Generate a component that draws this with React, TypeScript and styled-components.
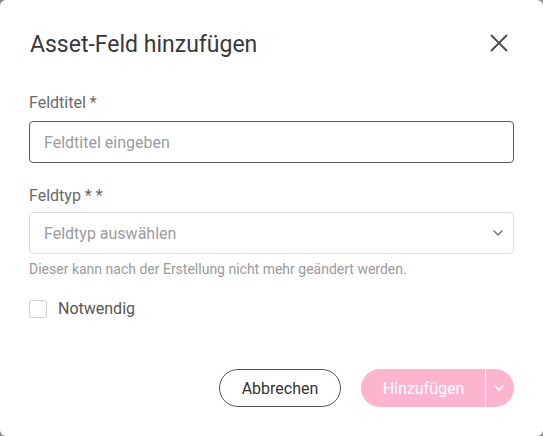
import React from "react";
import styled, { createGlobalStyle } from "styled-components";

const Global = createGlobalStyle`
  html, body { margin: 0; padding: 0; background: #8a8a8a; }
  body { font-family: Roboto, "Noto Sans", "Liberation Sans", sans-serif; }
  * { box-sizing: border-box; }
`;

const Dialog = styled.div`
  width: 543px;
  height: 436px;
  background: #ffffff;
  border-radius: 6px;
  padding: 32px 29px 29px 29px;
  display: flex;
  flex-direction: column;
`;

const Header = styled.div`
  display: flex;
  align-items: center;
  justify-content: space-between;
  height: 26px;
`;

const Title = styled.h2`
  margin: 0;
  font-size: 23px;
  line-height: 26px;
  font-weight: 400;
  color: #383838;
  padding-left: 1px;
`;

const CloseButton = styled.button`
  width: 24px;
  height: 24px;
  padding: 0;
  margin-right: 3px;
  margin-top: -4px;
  border: none;
  background: transparent;
  display: flex;
  align-items: center;
  justify-content: center;
  color: #4a4a4a;
`;

const Form = styled.div`
  margin-top: 35px;
  display: flex;
  flex-direction: column;
`;

const Label = styled.label<{ $mt?: number }>`
  display: block;
  font-size: 16px;
  line-height: 20px;
  color: #6a6a6a;
  margin-top: ${(p) => p.$mt ?? 0}px;
`;

const TextInput = styled.input`
  margin-top: 8px;
  width: 100%;
  height: 42px;
  border: 1px solid #5c5c5c;
  border-radius: 4px;
  padding: 0 14px;
  font-family: inherit;
  font-size: 16px;
  color: #333;
  outline: none;
  &::placeholder { color: #9b9b9b; }
`;

const Select = styled.div`
  margin-top: 6px;
  height: 42px;
  border: 1px solid #dcdcdc;
  border-radius: 4px;
  padding: 0 10px 0 14px;
  display: flex;
  align-items: center;
  justify-content: space-between;
  font-size: 16px;
  color: #9b9b9b;
`;

const Helper = styled.div`
  margin-top: 6px;
  font-size: 14px;
  line-height: 18px;
  color: #9a9a9a;
`;

const CheckRow = styled.label`
  margin-top: 22px;
  display: flex;
  align-items: center;
  gap: 11px;
  font-size: 16px;
  line-height: 18px;
  color: #555555;
`;

const CheckBox = styled.span`
  width: 18px;
  height: 18px;
  border: 1px solid #cfcfcf;
  border-radius: 3px;
  background: #fff;
`;

const Footer = styled.div`
  margin-top: auto;
  display: flex;
  justify-content: flex-end;
  gap: 20px;
`;

const OutlineButton = styled.button`
  height: 38px;
  padding: 0 20px;
  border: 1px solid #555555;
  border-radius: 19px;
  background: #fff;
  font-family: inherit;
  font-size: 16px;
  color: #333333;
  width: 122px;
`;

const SplitButton = styled.div`
  height: 38px;
  display: flex;
  border-radius: 19px;
  overflow: hidden;
  background: #fdb4cf;
`;

const SplitMain = styled.button`
  height: 38px;
  width: 125px;
  border: none;
  background: transparent;
  font-family: inherit;
  font-size: 16px;
  color: #ffffff;
  padding: 0 0 0 1px;
  border-right: 1px solid #ffffff;
`;

const SplitArrow = styled.button`
  height: 38px;
  width: 28px;
  border: none;
  background: transparent;
  padding: 0 2px 0 0;
  display: flex;
  align-items: center;
  justify-content: center;
  color: #ffffff;
`;

const Chevron = ({ color }: { color: string }) => (
  <svg width="10" height="6" viewBox="0 0 10 6" fill="none">
    <path d="M1 1 L5 5 L9 1" stroke={color} strokeWidth="1.5" strokeLinecap="round" strokeLinejoin="round" />
  </svg>
);

export default function App() {
  return (
    <>
      <Global />
      <Dialog>
        <Header>
          <Title>Asset-Feld hinzufügen</Title>
          <CloseButton aria-label="Schließen">
            <svg width="18" height="18" viewBox="0 0 18 18">
              <path d="M1.5 1.5 L16.5 16.5 M16.5 1.5 L1.5 16.5" stroke="#4a4a4a" strokeWidth="1.8" strokeLinecap="round" />
            </svg>
          </CloseButton>
        </Header>
        <Form>
          <Label>Feldtitel *</Label>
          <TextInput placeholder="Feldtitel eingeben" />
          <Label $mt={23}>Feldtyp * *</Label>
          <Select>
            <span>Feldtyp auswählen</span>
            <Chevron color="#777777" />
          </Select>
          <Helper>Dieser kann nach der Erstellung nicht mehr geändert werden.</Helper>
          <CheckRow>
            <CheckBox />
            Notwendig
          </CheckRow>
        </Form>
        <Footer>
          <OutlineButton>Abbrechen</OutlineButton>
          <SplitButton>
            <SplitMain>Hinzufügen</SplitMain>
            <SplitArrow>
              <Chevron color="#ffffff" />
            </SplitArrow>
          </SplitButton>
        </Footer>
      </Dialog>
    </>
  );
}
